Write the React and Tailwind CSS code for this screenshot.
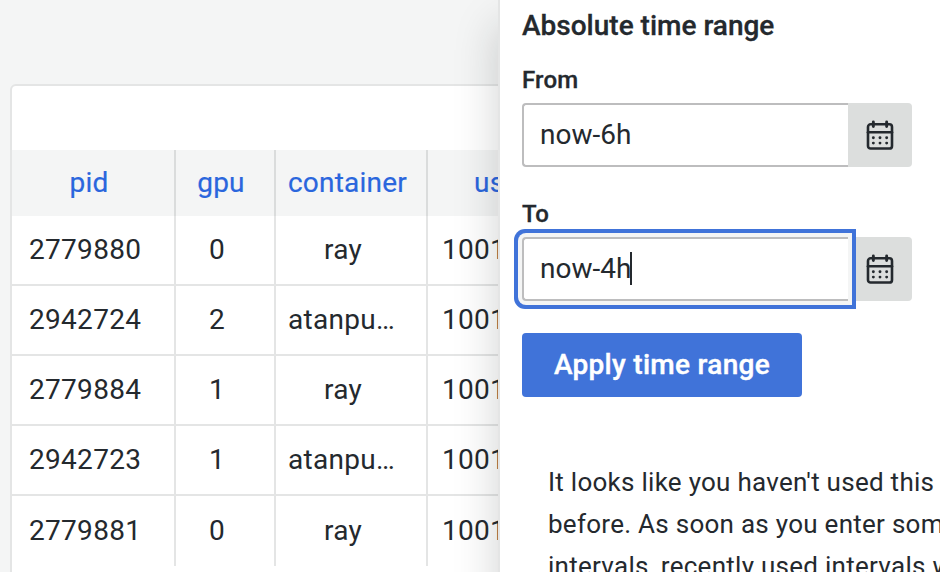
const rows = [
  ['2779880', '0', 'ray', '1001'],
  ['2942724', '2', 'atanpu…', '1001'],
  ['2779884', '1', 'ray', '1001'],
  ['2942723', '1', 'atanpu…', '1001'],
  ['2779881', '0', 'ray', '1001'],
];

function CalendarIcon() {
  return (
    <svg width="32" height="32" viewBox="0 0 32 32" fill="none" stroke="#24292e" strokeWidth="2.6" strokeLinecap="round">
      <rect x="4" y="5.3" width="24" height="24.2" rx="2.6" />
      <path d="M4 13.3H28" />
      <path d="M9.35 3V7.6M22.65 3V7.6" strokeWidth="2.9" />
      <g fill="#24292e" stroke="none">
        <circle cx="9.35" cy="18.7" r="1.45" />
        <circle cx="16" cy="18.7" r="1.45" />
        <circle cx="22.65" cy="18.7" r="1.45" />
        <circle cx="9.35" cy="24.1" r="1.45" />
        <circle cx="16" cy="24.1" r="1.45" />
        <circle cx="22.65" cy="24.1" r="1.45" />
      </g>
    </svg>
  );
}

function Field({ label, value, focused }) {
  return (
    <div>
      <div className="h-[32px] pt-px text-[24px] leading-[32px] font-medium tracking-[0.2px] [-webkit-text-stroke:0.3px]">{label}</div>
      <div className="mt-[8px] flex h-16">
        <div
          className={
            'relative flex w-[326px] items-center rounded-l-[4px] border-2 border-r-0 border-[#bdbdbe] bg-white pl-4 text-[28px] ' +
            (focused ? 'shadow-[0_0_0_4px_#f4f5f5,0_0_0_8px_#4073d9]' : '')
          }
        >
          <span>{value}</span>
          {focused && <span className="-mt-0.5 -ml-px h-[33px] w-[2px] bg-[#24292e]" />}
        </div>
        <div className="flex w-16 items-center justify-center rounded-r-[4px] bg-[#dcdedd]">
          <CalendarIcon />
        </div>
      </div>
    </div>
  );
}

function Table() {
  return (
    <div className="ml-[10px] mt-[84px] h-[600px] w-[700px] shrink-0 rounded-[6px] border-2 border-[#e4e5e5] bg-white pt-16 text-[28px] tracking-[0.3px]">
      <div className="flex h-[66px] bg-[#f4f5f5] leading-[66px] tracking-[0.2px] text-[#2a66dd] [-webkit-text-stroke:0.2px]">
        <div className="w-[164px] border-r-2 border-[#dadcdc] pr-[8px] text-center">pid</div>
        <div className="w-[100px] border-r-2 border-[#dadcdc] pr-[8px] text-center">gpu</div>
        <div className="w-[152px] border-r-2 border-[#dadcdc] pl-3">container</div>
        <div className="pl-[46px]">us</div>
      </div>
      {rows.map((r, i) => (
        <div
          key={i}
          className={'flex h-[70px] ' + (i < 4 ? 'border-b-2 border-[#e4e5e5] leading-[68px]' : 'leading-[70px]')}
        >
          <div className="w-[164px] border-r-2 border-[#e4e5e5] pl-[17px]">{r[0]}</div>
          <div className="w-[100px] border-r-2 border-[#e4e5e5] pr-4 text-center">{r[1]}</div>
          <div className={'w-[152px] border-r-2 border-[#e4e5e5] ' + (r[2] === 'ray' ? 'pr-4 text-center' : 'pl-3')}>
            {r[2]}
          </div>
          <div className="pl-[14px]">{r[3]}</div>
        </div>
      ))}
    </div>
  );
}

export default function App() {
  return (
    <div className="relative h-[572px] w-[940px] overflow-hidden bg-[#f4f5f5] font-[Roboto,sans-serif] text-[#24292e]">
      <Table />
      <div className="absolute top-0 left-[498px] h-[700px] w-[600px] border-l-2 border-[#e4e5e5] bg-white pl-[22px] shadow-[0_26px_40px_2px_rgba(24,26,27,0.18)]">
        <div className="pt-[6px] text-[28px] leading-[40px] font-medium [-webkit-text-stroke:0.3px]">Absolute time range</div>
        <div className="mt-[17px]">
          <Field label="From" value="now-6h" />
        </div>
        <div className="mt-[30px]">
          <Field label="To" value="now-4h" focused />
        </div>
        <button className="mt-8 block h-16 w-[280px] rounded-[4px] bg-[#4073d9] text-[28px] font-medium tracking-[0.3px] text-white [-webkit-text-stroke:0.4px]">
          Apply time range
        </button>
        <p className="mt-[64px] ml-[26px] text-[26px] leading-[42px] tracking-[0.27px] whitespace-nowrap">
          It looks like you haven't used this time picker
          <br />
          before. As soon as you enter some time
          <br />
          intervals, recently used intervals will appear
        </p>
      </div>
    </div>
  );
}
